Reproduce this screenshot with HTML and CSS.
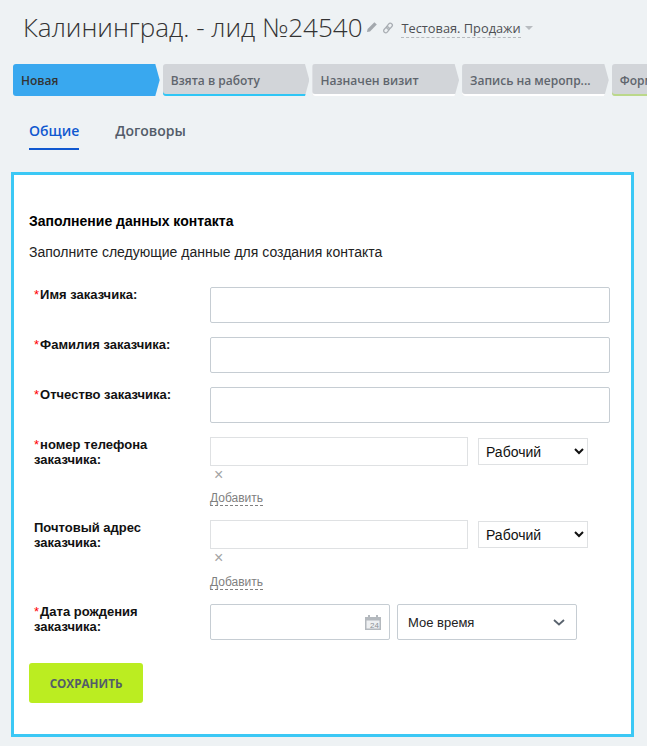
FILE: index.html
```html
<!DOCTYPE html>
<html lang="ru">
<head>
    <meta charset="UTF-8">
    <meta name="viewport" content="width=device-width, initial-scale=1.0">
    <title>Калининград. - лид №24540</title>
    <link rel="stylesheet" href="styles.css">
</head>
<body>
    <div class="page-head">
        <h1 class="page-title">Калининград. - лид №24540</h1>
        <svg class="head-icon" width="12" height="12" viewBox="0 0 12 12"><path d="M1 11l.6-3L8.4 1.200l2.400 2.400L4 10.400z" fill="#a3a8ad"/></svg>
        <svg class="head-icon" width="12" height="12" viewBox="0 0 12 12"><g fill="none" stroke="#a9aeb3" stroke-width="1.300"><rect x="5.500" y="0.900" width="4" height="6.500" rx="2" transform="rotate(40 7.500 4.200)"/><rect x="2.500" y="4.600" width="4" height="6.500" rx="2" transform="rotate(40 4.500 7.800)"/></g></svg>
        <span class="funnel">Тестовая. Продажи</span>
        <span class="funnel-arrow"></span>
    </div>

    <div class="stages">
        <div class="stage stage-active">Новая</div>
        <div class="stage stage-cyan">Взята в работу</div>
        <div class="stage stage-white">Назначен визит</div>
        <div class="stage stage-white">Запись на меропр...</div>
        <div class="stage stage-green">Форма</div>
    </div>

    <div class="tabs">
        <span class="tab tab-current">Общие</span>
        <span class="tab">Договоры</span>
    </div>

    <form class="card">
        <h2 class="card-title">Заполнение данных контакта</h2>
        <p class="card-text">Заполните следующие данные для создания контакта</p>

        <div class="row">
            <label class="row-label"><span class="req">*</span>Имя заказчика:</label>
            <input class="field field-wide" type="text">
        </div>
        <div class="row">
            <label class="row-label"><span class="req">*</span>Фамилия заказчика:</label>
            <input class="field field-wide" type="text">
        </div>
        <div class="row">
            <label class="row-label"><span class="req">*</span>Отчество заказчика:</label>
            <input class="field field-wide" type="text">
        </div>

        <div class="row row-multi">
            <label class="row-label"><span class="req">*</span>номер телефона заказчика:</label>
            <div>
                <div class="multi-line">
                    <input class="field field-multi" type="text">
                    <select class="type-select"><option>Рабочий</option></select>
                </div>
                <div class="remove">×</div>
                <span class="add-link">Добавить</span>
            </div>
        </div>
        <div class="row row-multi">
            <label class="row-label">Почтовый адрес заказчика:</label>
            <div>
                <div class="multi-line">
                    <input class="field field-multi" type="text">
                    <select class="type-select"><option>Рабочий</option></select>
                </div>
                <div class="remove">×</div>
                <span class="add-link">Добавить</span>
            </div>
        </div>

        <div class="row row-date">
            <label class="row-label"><span class="req">*</span>Дата рождения заказчика:</label>
            <div class="date-line">
                <div class="date-box">
                    <svg width="16" height="15" viewBox="0 0 16 15"><rect x="0" y="2" width="16" height="13" fill="#b4b9be"/><rect x="1.500" y="5.500" width="13" height="8" fill="#eef0f2"/><rect x="3" y="0" width="2" height="4" fill="#b4b9be"/><rect x="11" y="0" width="2" height="4" fill="#b4b9be"/></svg>
                    <span class="date-num">24</span>
                </div>
                <div class="time-select">
                    <span>Мое время</span>
                    <svg width="12" height="7" viewBox="0 0 12 7"><path d="M1 1l5 4.500L11 1" fill="none" stroke="#59636e" stroke-width="1.800"/></svg>
                </div>
            </div>
        </div>

        <button class="save-btn" type="button">Сохранить</button>
    </form>
</body>
</html>
```

FILE: styles.css
```css
body {
    margin: 0;
    height: 746px;
    overflow: hidden;
    background-color: #eef2f4;
    font-family: "Liberation Sans", Arial, sans-serif;
    color: #000;
}

/* шапка */
.page-head {
    display: flex;
    align-items: center;
    height: 54px;
    padding-left: 23px;
}
.page-title {
    margin: 0;
    font-family: "Open Sans", sans-serif;
    font-size: 26px;
    font-weight: 300;
    color: #333;
    white-space: nowrap;
}
.head-icon {
    margin-left: 4px;
}
.head-icon + .head-icon {
    margin-top: 1px;
}
.funnel {
    margin-left: 7px;
    margin-top: 4px;
    font-family: "Open Sans", sans-serif;
    font-size: 12.800px;
    color: #4d4f53;
    line-height: 17px;
    border-bottom: 1px dashed #b5b9bd;
}
.funnel-arrow {
    margin-left: 4px;
    margin-top: 2px;
    border-left: 4px solid transparent;
    border-right: 4px solid transparent;
    border-top: 4px solid #b8bcc0;
}

/* стадии */
.stages {
    display: flex;
    gap: 3px;
    margin-top: 10px;
    margin-left: 13px;
    overflow: hidden;
}
.stage {
    flex: 0 0 146.700px;
    box-sizing: border-box;
    height: 32px;
    padding-left: 8px;
    font-family: "Open Sans", sans-serif;
    font-size: 12px;
    font-weight: 600;
    line-height: 33px;
    color: #5f656d;
    background-color: #d2d5d9;
    border-radius: 3px;
    clip-path: polygon(0 0, 97% 0, 100% 50%, 97% 100%, 0 100%);
    white-space: nowrap;
}
.stage-active {
    background-color: #39a8ef;
    color: #333;
}
.stage-cyan {
    box-shadow: inset 0 -2px 0 #2fc6f6;
}
.stage-white {
    box-shadow: inset 0 -2px 0 #fff;
}
.stage-green {
    box-shadow: inset 0 -2px 0 #bbd88a;
}

/* вкладки */
.tabs {
    display: flex;
    gap: 36px;
    margin-top: 25px;
    margin-left: 29px;
}
.tab {
    padding-bottom: 8px;
    font-family: "Open Sans", sans-serif;
    font-size: 14px;
    font-weight: 600;
    line-height: 19px;
    color: #535c69;
}
.tab-current {
    color: #1058d0;
    border-bottom: 2px solid #1058d0;
}

/* карточка */
.card {
    box-sizing: border-box;
    width: 623px;
    height: 565px;
    margin: 22px 0 0 11px;
    padding: 38px 15px 0;
    background-color: #fff;
    border: 3px solid #3bc8f5;
}
.card-title {
    margin: 0;
    font-size: 14px;
    font-weight: bold;
    line-height: 16px;
}
.card-text {
    margin: 15px 0 27px;
    font-size: 14px;
    line-height: 16px;
    color: #222;
}
.row {
    display: grid;
    grid-template-columns: 176px 1fr;
    margin-left: 5px;
    margin-bottom: 14px;
}
.row-multi + .row-multi .add-link {
    margin-top: 9px;
}
.row-date {
    margin-top: 14px;
    margin-bottom: 23px;
}
.row-label {
    font-size: 13px;
    font-weight: bold;
    line-height: 15px;
    color: #111;
    padding-right: 30px;
}
.req {
    margin-right: 1px;
    color: #f00;
    font-weight: normal;
}
.field {
    box-sizing: border-box;
    margin: 0;
    background-color: #fff;
    border: 1px solid #c6cdd3;
    border-radius: 2px;
    outline: none;
}
.field-wide {
    width: 400px;
    height: 36px;
}
.multi-line {
    display: flex;
    align-items: center;
    gap: 10px;
}
.field-multi {
    width: 258px;
    height: 29px;
    border: 1px solid #dfe1e3;
    border-radius: 0;
}
.type-select {
    width: 110px;
    height: 27px;
    padding-left: 3px;
    font-family: "Liberation Sans", Arial, sans-serif;
    font-size: 14px;
    color: #111;
    background-color: #fff;
    border: 1px solid #dfe1e3;
    border-radius: 0;
}
.remove {
    margin-left: 4px;
    font-size: 16px;
    line-height: 17px;
    color: #a4a4a4;
}
.add-link {
    display: inline-block;
    margin-top: 8px;
    font-size: 12px;
    line-height: 14px;
    color: #808080;
    border-bottom: 1px dashed #808080;
}
.date-line {
    display: flex;
    gap: 7px;
}
.date-box {
    box-sizing: border-box;
    position: relative;
    display: flex;
    align-items: center;
    justify-content: flex-end;
    width: 180px;
    height: 36px;
    padding-right: 8px;
    border: 1px solid #c6cdd3;
    border-radius: 2px;
}
.date-num {
    position: absolute;
    right: 10px;
    top: 16px;
    font-size: 8px;
    line-height: 9px;
    color: #8b9096;
}
.time-select {
    box-sizing: border-box;
    display: flex;
    align-items: center;
    justify-content: space-between;
    width: 180px;
    height: 36px;
    padding: 0 11px 0 10px;
    font-size: 13px;
    color: #222;
    border: 1px solid #c6cdd3;
    border-radius: 2px;
}
.save-btn {
    display: block;
    width: 114px;
    height: 40px;
    padding: 0;
    font-family: "Open Sans", sans-serif;
    font-size: 11.700px;
    font-weight: 700;
    text-transform: uppercase;
    color: #535c69;
    background-color: #bbed21;
    border: none;
    border-radius: 3px;
    cursor: pointer;
}
```
